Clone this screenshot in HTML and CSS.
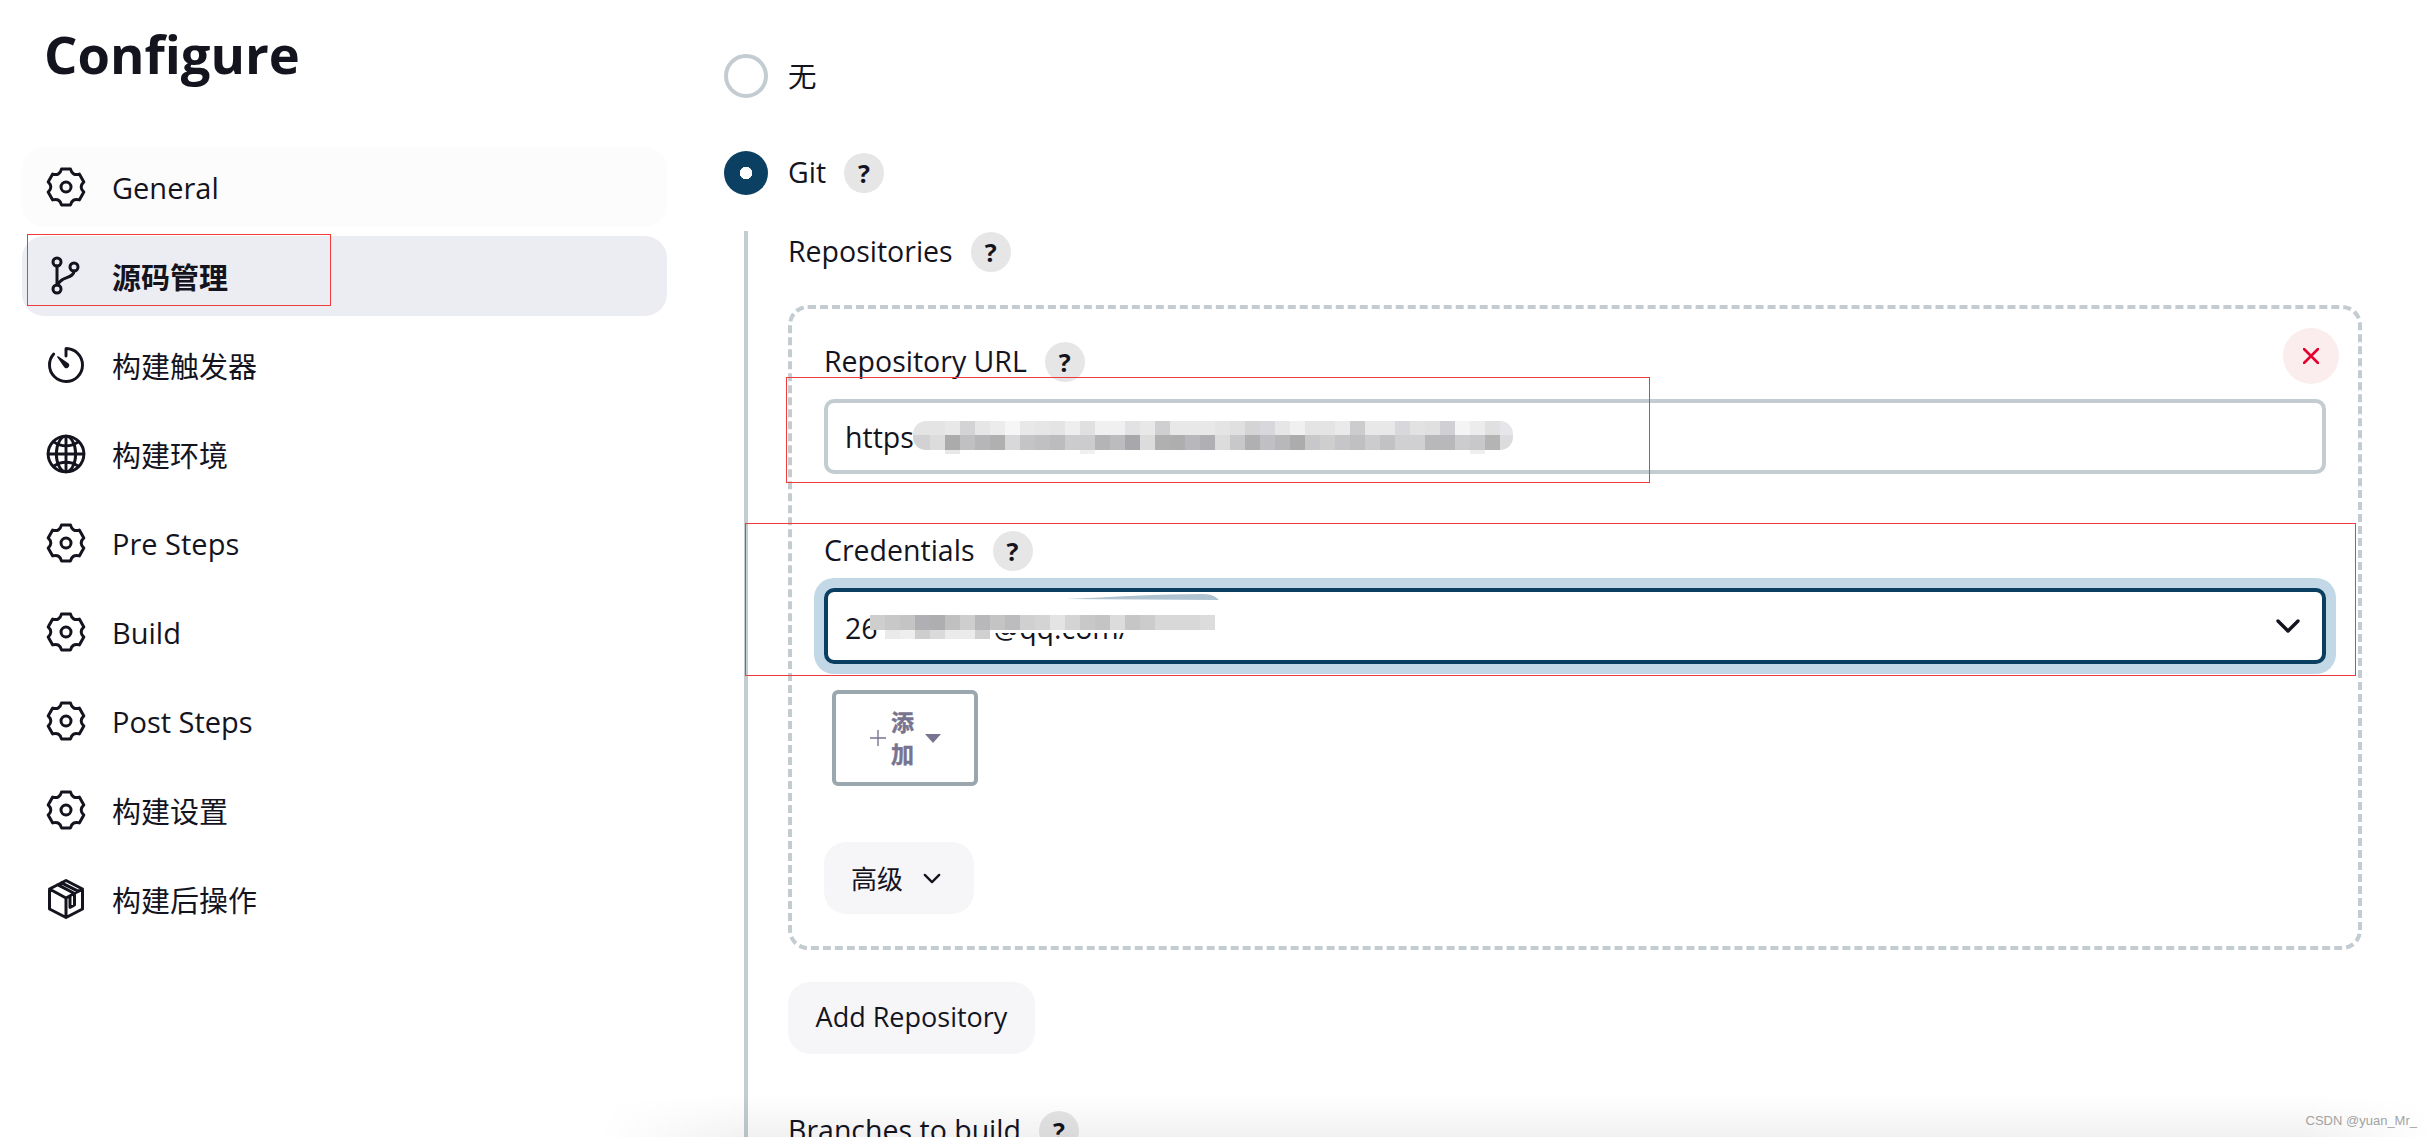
FILE: index.html
```html
<!DOCTYPE html>
<html lang="zh">
<head>
<meta charset="utf-8">
<title>Configure</title>
<link rel="stylesheet" href="styles.css">
</head>
<body>
<div class="page">
  <aside class="sidebar">
    <h1 class="title">Configure</h1>
    <nav class="nav">
      <a class="nav-item nav-item-hover"><svg class="nav-icon" viewBox="-2 -2 44 44"><use href="#gear"/></svg><span>General</span></a>
      <a class="nav-item nav-item-active"><svg class="nav-icon" viewBox="-2 -2 44 44"><circle cx="11" cy="6" r="4"/><circle cx="28" cy="11" r="4"/><circle cx="11" cy="33" r="4"/><path d="M11 10v19M28 15c0 8-14 5-16 14"/></svg><span>源码管理</span></a>
      <a class="nav-item"><svg class="nav-icon" viewBox="0 0 512 512"><path class="thick" d="M112.91 128A191.85 191.85 0 0064 254c-1.18 106.35 85.65 193.8 192 194 106.2.2 192-85.83 192-192 0-104.54-83.55-189.61-187.5-192a4.36 4.36 0 00-4.5 4.37V152"/><path class="solid" d="M233.38 278.63l-79-113a8.13 8.13 0 0111.32-11.32l113 79a32.5 32.5 0 01-37.25 53.26 33.21 33.21 0 01-8.07-7.94z"/></svg><span>构建触发器</span></a>
      <a class="nav-item"><svg class="nav-icon" viewBox="0 0 512 512"><g class="thick"><path d="M256 48C141.13 48 48 141.13 48 256s93.13 208 208 208 208-93.13 208-208S370.87 48 256 48z"/><path d="M256 48c-58.07 0-112.67 93.31-112.67 208S197.93 464 256 464s112.67-93.31 112.67-208S314.07 48 256 48z"/><path d="M117.33 117.33c38.24 27.15 86.38 43.34 138.67 43.34s100.43-16.19 138.67-43.34M394.67 394.67c-38.24-27.15-86.38-43.34-138.67-43.34s-100.43 16.19-138.67 43.34"/><path d="M256 48v416M464 256H48"/></g></svg><span>构建环境</span></a>
      <a class="nav-item"><svg class="nav-icon" viewBox="-2 -2 44 44"><use href="#gear"/></svg><span>Pre Steps</span></a>
      <a class="nav-item"><svg class="nav-icon" viewBox="-2 -2 44 44"><use href="#gear"/></svg><span>Build</span></a>
      <a class="nav-item"><svg class="nav-icon" viewBox="-2 -2 44 44"><use href="#gear"/></svg><span>Post Steps</span></a>
      <a class="nav-item"><svg class="nav-icon" viewBox="-2 -2 44 44"><use href="#gear"/></svg><span>构建设置</span></a>
      <a class="nav-item"><svg class="nav-icon" viewBox="-2 -2 44 44"><path d="M20 1.500L36.500 10V30L20 38.500L3.500 30V10ZM3.500 10L20 19L36.500 10M20 19V38.500M11.500 5.700L28.500 14.500V26L24 28.300V17M15.500 3.800L32.500 12.300"/></svg><span>构建后操作</span></a>
    </nav>
  </aside>

  <main class="main">
    <label class="radio-row"><span class="radio"></span><span class="label-text">无</span></label>
    <label class="radio-row radio-row-git"><span class="radio radio-on"></span><span class="label-text">Git</span><span class="help">?</span></label>

    <section class="git-body">
      <div class="field-label"><span class="label-text">Repositories</span><span class="help">?</span></div>

      <div class="repo-box">
        <button class="close" type="button"><svg class="close-icon" viewBox="0 0 16 16"><path d="M1 1l14 14M15 1L1 15"/></svg></button>

        <div class="field-label"><span class="label-text">Repository URL</span><span class="help">?</span></div>
        <div class="text-input">
          <span>https</span>
          <svg class="mosaic mosaic-url" width="620" height="50" viewBox="0 0 620 50">
            <defs><clipPath id="urlclip"><rect x="13" y="11" width="600" height="29" rx="13"/></clipPath></defs>
            <g clip-path="url(#urlclip)" shape-rendering="crispEdges">
              <rect x="0" y="11" width="60" height="14" fill="#e4e4e4"/><rect x="60" y="11" width="15" height="14" fill="#e6e6e6"/><rect x="45" y="11" width="15" height="14" fill="#e8e8e8"/><rect x="60" y="11" width="15" height="14" fill="#d3d3d6"/><rect x="75" y="11" width="15" height="14" fill="#e6e6e6"/><rect x="90" y="11" width="15" height="14" fill="#ececec"/><rect x="105" y="11" width="15" height="14" fill="#f6f6f6"/><rect x="120" y="11" width="15" height="14" fill="#e8e8e8"/><rect x="135" y="11" width="15" height="14" fill="#e6e6e6"/><rect x="150" y="11" width="15" height="14" fill="#e4e4e4"/><rect x="165" y="11" width="15" height="14" fill="#eeeeee"/><rect x="180" y="11" width="15" height="14" fill="#e0e0e0"/><rect x="195" y="11" width="30" height="14" fill="#f0f0f0"/><rect x="225" y="11" width="15" height="14" fill="#e2e2e4"/><rect x="240" y="11" width="15" height="14" fill="#e8e8e8"/><rect x="255" y="11" width="15" height="14" fill="#cfcfd2"/><rect x="270" y="11" width="60" height="14" fill="#e8e8e8"/>
              <rect x="315" y="11" width="15" height="14" fill="#e4e4e4"/><rect x="330" y="11" width="15" height="14" fill="#e0e0e0"/><rect x="345" y="11" width="15" height="14" fill="#d4d4d4"/><rect x="360" y="11" width="15" height="14" fill="#d8d8dc"/><rect x="375" y="11" width="15" height="14" fill="#e6e6e6"/><rect x="390" y="11" width="15" height="14" fill="#f0f0f0"/><rect x="405" y="11" width="30" height="14" fill="#e4e4e4"/><rect x="435" y="11" width="15" height="14" fill="#eaeaea"/><rect x="450" y="11" width="15" height="14" fill="#cccccf"/><rect x="465" y="11" width="30" height="14" fill="#e8e8e8"/><rect x="495" y="11" width="15" height="14" fill="#d8d8dc"/><rect x="510" y="11" width="15" height="14" fill="#e2e2e2"/><rect x="525" y="11" width="15" height="14" fill="#e0e0e0"/><rect x="540" y="11" width="15" height="14" fill="#d0d0d4"/><rect x="555" y="11" width="15" height="14" fill="#f4f4f4"/><rect x="570" y="11" width="15" height="14" fill="#ececec"/><rect x="585" y="11" width="15" height="14" fill="#e0e0e0"/><rect x="600" y="11" width="15" height="14" fill="#e6e6ea"/>
              <rect x="0" y="25" width="30" height="15" fill="#d2d2d4"/><rect x="30" y="25" width="15" height="15" fill="#dcdcdc"/><rect x="45" y="25" width="15" height="15" fill="#ababab"/><rect x="60" y="25" width="15" height="15" fill="#c0c0c2"/><rect x="75" y="25" width="15" height="15" fill="#b6b6b8"/><rect x="90" y="25" width="15" height="15" fill="#b0b0b0"/><rect x="105" y="25" width="15" height="15" fill="#d8d8da"/><rect x="120" y="25" width="15" height="15" fill="#c4c4c6"/><rect x="135" y="25" width="15" height="15" fill="#c0c0c2"/><rect x="150" y="25" width="15" height="15" fill="#bcbcbe"/><rect x="165" y="25" width="30" height="15" fill="#cccccf"/><rect x="195" y="25" width="15" height="15" fill="#b4b4b6"/><rect x="210" y="25" width="15" height="15" fill="#bcbcbe"/><rect x="225" y="25" width="15" height="15" fill="#a8a8ac"/><rect x="240" y="25" width="15" height="15" fill="#dcdcdc"/><rect x="255" y="25" width="15" height="15" fill="#b0b0b0"/><rect x="270" y="25" width="15" height="15" fill="#aeaeae"/><rect x="285" y="25" width="15" height="15" fill="#b8b8bc"/><rect x="300" y="25" width="15" height="15" fill="#b0b0b4"/>
              <rect x="315" y="25" width="15" height="15" fill="#dcdcdc"/><rect x="330" y="25" width="15" height="15" fill="#c8c8ca"/><rect x="345" y="25" width="15" height="15" fill="#b0b0b2"/><rect x="360" y="25" width="15" height="15" fill="#c0c0c4"/><rect x="375" y="25" width="15" height="15" fill="#b8b8ba"/><rect x="390" y="25" width="15" height="15" fill="#acacac"/><rect x="405" y="25" width="15" height="15" fill="#c8c8ca"/><rect x="420" y="25" width="15" height="15" fill="#cecece"/><rect x="435" y="25" width="15" height="15" fill="#c6c6c8"/><rect x="450" y="25" width="15" height="15" fill="#c0c0c2"/><rect x="465" y="25" width="15" height="15" fill="#cccccf"/><rect x="480" y="25" width="15" height="15" fill="#c2c2c4"/><rect x="495" y="25" width="30" height="15" fill="#d0d0d2"/><rect x="525" y="25" width="30" height="15" fill="#b8b8ba"/><rect x="555" y="25" width="15" height="15" fill="#cccccf"/><rect x="570" y="25" width="15" height="15" fill="#c8c8ca"/><rect x="585" y="25" width="15" height="15" fill="#b4b4b4"/><rect x="600" y="25" width="15" height="15" fill="#dcdcde"/>
            </g>
            <g shape-rendering="crispEdges"><rect x="45" y="40" width="15" height="4" fill="#e8e8e8"/><rect x="180" y="40" width="15" height="4" fill="#f0f0f0"/><rect x="570" y="40" width="15" height="4" fill="#efefef"/></g>
          </svg>
        </div>

        <div class="field-label field-label-cred"><span class="label-text">Credentials</span><span class="help">?</span></div>
        <div class="select">
          <span class="select-value"><span>26</span><span class="cred-gap"></span><span>@qq.com/</span></span>
          <svg class="chevron" viewBox="0 0 24 14"><path d="M2 2l10 10L22 2"/></svg>
          <svg class="mosaic mosaic-cred" width="370" height="60" viewBox="0 0 370 60">
            <path d="M206 9C250 7 300 4 343 4C352 4 356 7 359 10Z" fill="#aec2d0"/>
            <g shape-rendering="crispEdges">
              <rect x="10" y="25" width="15" height="15" fill="#cecece"/><rect x="25" y="25" width="15" height="15" fill="#c8c8c8"/><rect x="40" y="25" width="15" height="15" fill="#c4c4c4"/><rect x="55" y="25" width="15" height="15" fill="#b0b0b4"/><rect x="70" y="25" width="15" height="15" fill="#aeaeb0"/><rect x="85" y="25" width="15" height="15" fill="#c0c0c0"/><rect x="100" y="25" width="15" height="15" fill="#cecece"/><rect x="115" y="25" width="15" height="15" fill="#b8b8ba"/><rect x="130" y="25" width="15" height="15" fill="#c4c4c4"/><rect x="145" y="25" width="15" height="15" fill="#bcbcbe"/><rect x="160" y="25" width="15" height="15" fill="#d0d0d0"/><rect x="175" y="25" width="15" height="15" fill="#d4d4d4"/><rect x="190" y="25" width="15" height="15" fill="#e4e4e4"/><rect x="205" y="25" width="15" height="15" fill="#d4d4d4"/><rect x="220" y="25" width="15" height="15" fill="#c8c8c8"/><rect x="235" y="25" width="15" height="15" fill="#c4c4c4"/><rect x="250" y="25" width="15" height="15" fill="#dcdcdc"/><rect x="265" y="25" width="15" height="15" fill="#c6c6c6"/><rect x="280" y="25" width="15" height="15" fill="#cccccc"/><rect x="295" y="25" width="45" height="15" fill="#d8d8d8"/><rect x="340" y="25" width="15" height="15" fill="#dcdcdc"/>
              <rect x="25" y="40" width="15" height="9" fill="#eaeaea"/><rect x="40" y="40" width="15" height="9" fill="#eeeeee"/><rect x="55" y="40" width="15" height="9" fill="#cecece"/><rect x="70" y="40" width="15" height="9" fill="#dadada"/><rect x="85" y="40" width="30" height="9" fill="#ebebeb"/><rect x="115" y="40" width="15" height="9" fill="#d0d0d0"/>
              <rect x="130" y="40" width="205" height="3" fill="#ffffff"/>
            </g>
          </svg>
        </div>

        <button class="add-btn" type="button">
          <svg class="add-plus" viewBox="0 0 16 16"><path d="M8 0v16M0 8h16"/></svg>
          <span class="add-text">添加</span>
          <span class="add-caret"></span>
        </button>

        <button class="soft-btn advanced" type="button"><span>高级</span><svg class="adv-chevron" viewBox="0 0 20 12"><path d="M2 2l8 8 8-8"/></svg></button>
      </div>

      <button class="soft-btn add-repo" type="button"><span class="label-text">Add Repository</span></button>

      <div class="field-label field-label-branches"><span class="label-text">Branches to build</span><span class="help">?</span></div>
    </section>
  </main>
</div>

<div class="mark mark-nav"></div>
<div class="mark mark-url"></div>
<div class="mark mark-cred"></div>
<div class="bottom-fade"></div>
<div class="watermark">CSDN @yuan_Mr_</div>

<svg class="defs" width="0" height="0">
  <defs>
    <path id="gear" d="M15.500 2H24.500Q26.250 9.170 33.340 7.100L37.840 14.900Q32.500 20 37.840 25.100L33.340 32.900Q26.250 30.830 24.500 38H15.500Q13.750 30.830 6.660 32.900L2.160 25.100Q7.500 20 2.160 14.900L6.660 7.100Q13.750 9.170 15.500 2ZM25 20A5 5 0 1 1 15 20A5 5 0 1 1 25 20Z"/>
  </defs>
</svg>
</body>
</html>
```
FILE: styles.css
```css
* { box-sizing: border-box; }
html, body { margin: 0; height: 1137px; overflow: hidden; background: #fff; }
body {
  font-family: "Open Sans", "Noto Sans CJK SC", sans-serif;
  font-size: 28.500px;
  color: #14141f;
  position: relative;
}
.page { display: flex; height: 1137px; overflow: hidden; }
.defs { position: absolute; }

/* Sidebar */
.sidebar { width: 667px; flex: none; padding-left: 22px; }
.title {
  margin: 0;
  height: 147px;
  padding: 20px 0 0 22px;
  font-size: 52.500px;
  line-height: 68px;
  font-weight: 700;
}
.nav { display: flex; flex-direction: column; gap: 9px; }
.nav-item {
  display: flex;
  align-items: center;
  gap: 24px;
  height: 80px;
  padding-left: 22px;
  border-radius: 22px;
  font-size: 29px;
}
.nav-item-hover { background: #fcfcfc; }
.nav-item-active { background: #ecedf3; font-weight: 700; }
.nav-icon {
  width: 44px;
  height: 44px;
  flex: none;
  fill: none;
  stroke: #14141f;
  stroke-width: 3;
  stroke-linecap: round;
  stroke-linejoin: round;
}
.nav-icon .thick { stroke-width: 34; fill: none; }
.nav-icon .solid { fill: #14141f; stroke: none; }

/* Main */
.main { flex: 1; padding: 54px 70px 0 57px; min-width: 0; }
.label-text { padding-bottom: 3px; }
.radio-row { display: flex; align-items: center; gap: 20px; height: 44px; }
.radio-row-git { margin-top: 53px; }
.radio-row .help { margin-left: -2px; }
.radio {
  width: 44px;
  height: 44px;
  border-radius: 50%;
  border: 4px solid #c3ccd1;
  flex: none;
}
.radio-on {
  border: 0;
  background: radial-gradient(circle, #fff 6px, #0b4063 6.500px);
}
.help {
  width: 40px;
  height: 40px;
  flex: none;
  border-radius: 50%;
  background: #e6e6e6;
  display: flex;
  align-items: center;
  justify-content: center;
  font-size: 25px;
  font-weight: 700;
  line-height: 1;
}
.git-body {
  margin: 36px 0 0 20px;
  padding: 1px 0 0 40px;
  border-left: 4px solid #c3ccd1;
}
.field-label { display: flex; align-items: center; gap: 18px; height: 40px; }

/* Repository box */
.repo-box {
  position: relative;
  margin-top: 33px;
  padding: 33px 32px 32px;
  border: 4px dashed #c3ccd1;
  border-radius: 20px;
  height: 645px;
}
.close {
  position: absolute;
  top: 19px;
  right: 19px;
  width: 56px;
  height: 56px;
  border: 0;
  padding: 0;
  border-radius: 50%;
  background: #fbecee;
  display: flex;
  align-items: center;
  justify-content: center;
}
.close-icon { width: 16px; height: 16px; stroke: #e6002e; stroke-width: 2.600; fill: none; stroke-linecap: round; }
.text-input, .select {
  position: relative;
  display: flex;
  align-items: center;
  margin-top: 17px;
  padding: 0 0 0 17px;
  border-radius: 10px;
  background: #fff;
}
.text-input { height: 75px; border: 4px solid #c3ccd1; }
.select {
  height: 76px;
  border: 4px solid #0b3f62;
  justify-content: space-between;
  padding-right: 22px;
  box-shadow: 0 0 0 10px #c2d8e6;
}
.select-value { display: flex; padding-top: 4px; }
.cred-gap { width: 116px; }
.chevron { width: 24px; height: 14px; fill: none; stroke: #14141f; stroke-width: 3.400; stroke-linecap: round; stroke-linejoin: round; }
.mosaic { position: absolute; overflow: visible; }
.mosaic-url { left: 72px; top: 7px; }
.mosaic-cred { left: 32px; top: -2px; }
.field-label-cred { margin-top: 57px; }

.add-btn {
  display: flex;
  align-items: center;
  justify-content: center;
  width: 146px;
  height: 96px;
  margin: 26px 0 0 8px;
  padding: 0;
  border: 4px solid #9aa7ae;
  border-radius: 6px;
  background: #fff;
  color: #77748f;
  font-family: inherit;
}
.add-plus { width: 16px; height: 16px; stroke: #77748f; stroke-width: 1.400; fill: none; flex: none; }
.add-text { width: 24px; margin: 0 10px 0 5px; font-size: 23px; font-weight: 700; line-height: 32px; text-align: center; -webkit-text-stroke: 0.400px #77748f; }
.add-caret {
  width: 0;
  height: 0;
  border-left: 8px solid transparent;
  border-right: 8px solid transparent;
  border-top: 9px solid #77748f;
}

.soft-btn {
  display: flex;
  align-items: center;
  height: 72px;
  border: 0;
  border-radius: 22px;
  background: #f6f6f9;
  color: #14141f;
  font-family: inherit;
  font-size: 27px;
}
.advanced { width: 150px; margin-top: 56px; padding: 0 0 0 27px; gap: 20px; font-size: 26px; }
.adv-chevron { width: 18px; height: 11px; fill: none; stroke: #14141f; stroke-width: 2.600; stroke-linecap: round; stroke-linejoin: round; }
.add-repo { margin-top: 32px; width: 247px; padding: 0; justify-content: center; }
.field-label-branches { margin-top: 57px; }

/* Overlays: annotation rectangles, bottom shadow, watermark */
.mark { position: absolute; border: 1px solid #ef3b3b; pointer-events: none; }
.mark-nav { left: 27px; top: 234px; width: 304px; height: 72px; }
.mark-url { left: 786px; top: 377px; width: 864px; height: 106px; }
.mark-cred { left: 745px; top: 523px; width: 1611px; height: 153px; }
.bottom-fade {
  position: absolute;
  left: 600px;
  right: 0;
  bottom: 0;
  height: 42px;
  background: linear-gradient(to bottom, rgba(0,0,0,0), rgba(0,0,0,.055));
  -webkit-mask-image: linear-gradient(to right, transparent, #000 150px, #000 1700px, transparent);
  mask-image: linear-gradient(to right, transparent, #000 150px, #000 1700px, transparent);
}
.watermark {
  position: absolute;
  right: 15px;
  top: 1112px;
  font-family: "Liberation Sans", sans-serif;
  font-size: 13px;
  line-height: 18px;
  color: #a3a3a3;
}
```
